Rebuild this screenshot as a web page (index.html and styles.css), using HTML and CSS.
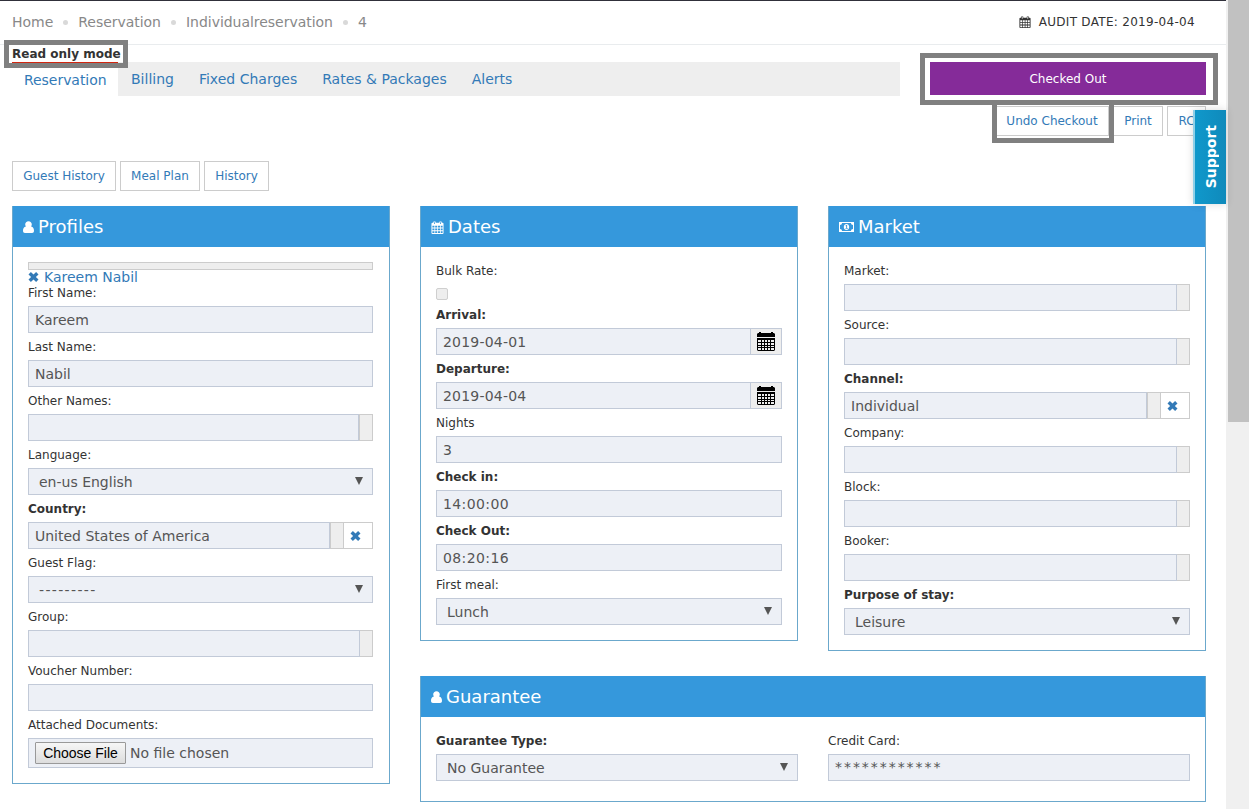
FILE: index.html
```html
<!DOCTYPE html>
<html lang="en">
<head>
    <meta charset="UTF-8">
    <meta name="viewport" content="width=device-width, initial-scale=1.0">
    <title>Reservation</title>
    <link rel="stylesheet" href="styles.css">
</head>
<body>
    <!-- Icon set -->
    <svg class="sprite" width="0" height="0">
        <symbol id="icon-user" viewBox="0 0 11 12">
            <path d="M5.5 0.2C7.4 0.2 8.8 1.6 8.8 3.3C8.8 4.3 8.5 4.9 8.1 5.4C10.2 5.7 11 7.4 11 9.8C11 11.2 10.2 12 9.1 12H1.9C0.8 12 0 11.2 0 9.8C0 7.4 0.8 5.7 2.9 5.4C2.5 4.9 2.2 4.3 2.2 3.3C2.2 1.6 3.6 0.2 5.5 0.2Z"/>
        </symbol>
        <symbol id="icon-calendar" viewBox="0 0 13 14">
            <path fill-rule="evenodd" d="M1 2H2V1C2 0.3 4.5 0.3 4.5 1V2H8.5V1C8.5 0.3 11 0.3 11 1V2H12C12.6 2 13 2.4 13 3V13C13 13.6 12.6 14 12 14H1C0.4 14 0 13.6 0 13V3C0 2.4 0.4 2 1 2ZM1 5V7H3.2V5ZM4 5V7H6.2V5ZM7 5V7H9.2V5ZM10 5V7H12V5ZM1 8V10H3.2V8ZM4 8V10H6.2V8ZM7 8V10H9.2V8ZM10 8V10H12V8ZM1 11V13H3.2V11ZM4 11V13H6.2V11ZM7 11V13H9.2V11ZM10 11V13H12V11ZM2.8 1.3V3.3H3.7V1.3ZM9.3 1.3V3.3H10.2V1.3Z"/>
        </symbol>
        <symbol id="icon-money" viewBox="0 0 15 10">
            <path fill-rule="evenodd" d="M0 0H15V10H0ZM3 1C3 2.2 2.2 3 1 3V7C2.2 7 3 7.8 3 9H12C12 7.8 12.8 7 14 7V3C12.8 3 12 2.2 12 1ZM7.5 2C9 2 10.2 3.2 10.2 5C10.2 6.8 9 8 7.5 8C6 8 4.8 6.8 4.8 5C4.8 3.2 6 2 7.5 2ZM6.4 3.7L6.8 4.2L7.2 4V6H6.5V6.7H8.8V6H8.1V3.1H7.4Z"/>
        </symbol>
        <symbol id="icon-datepicker" viewBox="0 0 18 19">
            <path fill-rule="evenodd" d="M1 1H2V0H4V1H14V0H16V1H17L18 2V5H0V2ZM0 6H18V18L17 19H1L0 18ZM1 8V10H4V8ZM5 8V10H7V8ZM8 8V10H10V8ZM11 8V10H13V8ZM14 8V10H17V8ZM1 11V13H4V11ZM5 11V13H7V11ZM8 11V13H10V11ZM11 11V13H13V11ZM14 11V13H17V11ZM1 14V15H4V14ZM5 14V15H7V14ZM8 14V15H10V14ZM11 14V15H13V14ZM14 14V15H17V14ZM1 16V18H4V16ZM5 16V18H7V16ZM8 16V18H10V16ZM11 16V18H13V16ZM14 16V18H17V16Z"/>
        </symbol>
        <symbol id="icon-times" viewBox="0 0 10 10">
            <path d="M2.4 0.1L5 2.5L7.6 0.1L10 2.4L7.4 5L10 7.6L7.6 9.9L5 7.5L2.4 9.9L0 7.6L2.6 5L0 2.4Z"/>
        </symbol>
    </svg>

    <div class="page">
        <header class="top-bar">
            <ul class="breadcrumb">
                <li>Home</li>
                <li>Reservation</li>
                <li>Individualreservation</li>
                <li>4</li>
            </ul>
            <div class="audit-date">
                <svg width="12" height="12"><use href="#icon-calendar"/></svg>
                <span>AUDIT DATE: 2019-04-04</span>
            </div>
        </header>

        <main class="content">
            <div class="read-only"><span class="read-only-text">Read only mode</span></div>

            <div class="nav-row">
                <ul class="tabs">
                    <li class="active">Reservation</li>
                    <li>Billing</li>
                    <li>Fixed Charges</li>
                    <li>Rates &amp; Packages</li>
                    <li>Alerts</li>
                </ul>
                <div class="status">Checked Out</div>
            </div>

            <div class="actions">
                <a class="btn undo">Undo Checkout</a>
                <a class="btn print">Print</a>
                <a class="btn rc">RC</a>
            </div>

            <div class="history">
                <a class="btn guest-history">Guest History</a>
                <a class="btn meal-plan">Meal Plan</a>
                <a class="btn history-link">History</a>
            </div>

            <div class="panels">
                <section class="panel profiles">
                    <h2><svg width="11" height="12"><use href="#icon-user"/></svg>Profiles</h2>
                    <div class="panel-body">
                        <div class="strip"></div>
                        <div class="guest"><svg width="11" height="10"><use href="#icon-times"/></svg>Kareem Nabil</div>
                        <label>First Name:</label>
                        <div class="field">Kareem</div>
                        <label>Last Name:</label>
                        <div class="field">Nabil</div>
                        <label>Other Names:</label>
                        <div class="group"><div class="field"></div><span class="addon double"></span></div>
                        <label>Language:</label>
                        <div class="field select">en-us English</div>
                        <label class="required">Country:</label>
                        <div class="group">
                            <div class="field">United States of America</div><span class="addon double"></span>
                            <span class="clear"><svg width="11" height="10"><use href="#icon-times"/></svg></span>
                        </div>
                        <label>Guest Flag:</label>
                        <div class="field select dashes">---------</div>
                        <label>Group:</label>
                        <div class="group"><div class="field"></div><span class="addon"></span></div>
                        <label>Voucher Number:</label>
                        <div class="field"></div>
                        <label>Attached Documents:</label>
                        <div class="field file"><span class="file-btn">Choose File</span>No file chosen</div>
                    </div>
                </section>

                <div class="right-side">
                    <section class="panel">
                        <h2><svg width="13" height="13"><use href="#icon-calendar"/></svg>Dates</h2>
                        <div class="panel-body">
                            <label>Bulk Rate:</label>
                            <div class="check-row"><span class="checkbox"></span></div>
                            <label class="required">Arrival:</label>
                            <div class="group">
                                <div class="field date">2019-04-01</div>
                                <span class="picker"><svg width="18" height="19"><use href="#icon-datepicker"/></svg></span>
                            </div>
                            <label class="required">Departure:</label>
                            <div class="group">
                                <div class="field date">2019-04-04</div>
                                <span class="picker"><svg width="18" height="19"><use href="#icon-datepicker"/></svg></span>
                            </div>
                            <label>Nights</label>
                            <div class="field">3</div>
                            <label class="required">Check in:</label>
                            <div class="field time">14:00:00</div>
                            <label class="required">Check Out:</label>
                            <div class="field time">08:20:16</div>
                            <label>First meal:</label>
                            <div class="field select">Lunch</div>
                        </div>
                    </section>

                    <section class="panel">
                        <h2><svg width="15" height="10"><use href="#icon-money"/></svg>Market</h2>
                        <div class="panel-body">
                            <label>Market:</label>
                            <div class="group"><div class="field"></div><span class="addon"></span></div>
                            <label>Source:</label>
                            <div class="group"><div class="field"></div><span class="addon"></span></div>
                            <label class="required">Channel:</label>
                            <div class="group">
                                <div class="field">Individual</div><span class="addon double"></span>
                                <span class="clear"><svg width="11" height="10"><use href="#icon-times"/></svg></span>
                            </div>
                            <label>Company:</label>
                            <div class="group"><div class="field"></div><span class="addon"></span></div>
                            <label>Block:</label>
                            <div class="group"><div class="field"></div><span class="addon"></span></div>
                            <label>Booker:</label>
                            <div class="group"><div class="field"></div><span class="addon"></span></div>
                            <label class="required">Purpose of stay:</label>
                            <div class="field select">Leisure</div>
                        </div>
                    </section>

                    <section class="panel guarantee">
                        <h2><svg width="11" height="12"><use href="#icon-user"/></svg>Guarantee</h2>
                        <div class="panel-body">
                            <div>
                                <label class="required">Guarantee Type:</label>
                                <div class="field select">No Guarantee</div>
                            </div>
                            <div>
                                <label>Credit Card:</label>
                                <div class="field card">************</div>
                            </div>
                        </div>
                    </section>
                </div>
            </div>
        </main>

        <!-- Highlight boxes -->
        <div class="mark mark-mode"></div>
        <div class="mark mark-undo"></div>
        <div class="mark mark-status"></div>

        <div class="support"><span>Support</span></div>
    </div>
    <div class="scrollbar"><div class="thumb"></div></div>
</body>
</html>
```
FILE: styles.css
```css
* {
    box-sizing: border-box;
}

body {
    display: flex;
    height: 809px;
    margin: 0;
    overflow: hidden;
    background-color: #ffffff;
    color: #333333;
    font-family: "DejaVu Sans", Verdana, sans-serif;
    font-size: 14px;
}

ul {
    display: flex;
    list-style: none;
    margin: 0;
    padding: 0;
}

svg {
    flex: none;
    fill: currentColor;
}

.sprite {
    position: absolute;
}

.page {
    position: relative;
    flex: 1;
    border-top: 1px solid #30303a;
}

/* Header */
.top-bar {
    display: flex;
    justify-content: space-between;
    height: 44px;
    padding: 0 31px 0 12px;
    border-bottom: 1px solid #e9ecee;
    line-height: 42px;
}

.breadcrumb {
    height: 42px;
    color: #888888;
    letter-spacing: -0.03px;
}

.breadcrumb li {
    display: flex;
    align-items: center;
}

.breadcrumb li + li::before {
    content: "";
    width: 5px;
    height: 5px;
    margin: 0 10px;
    border-radius: 50%;
    background-color: #d9d9d9;
}

.audit-date {
    display: flex;
    align-items: center;
    gap: 8px;
    font-size: 12px;
    letter-spacing: 0.3px;
    line-height: 40px;
    height: 41px;
}

.content {
    padding: 0 20px 0 12px;
}

.read-only {
    height: 17px;
    font-size: 12px;
    font-weight: bold;
    line-height: 19px;
}

.read-only-text {
    display: block;
    width: 106px;
    white-space: nowrap;
}

/* Tabs */
.nav-row {
    display: flex;
    gap: 30px;
    height: 34px;
}

.tabs {
    flex: 1;
    background-color: #eeeeee;
    color: #337ab7;
    line-height: 34px;
}

.tabs li {
    padding: 0 12px 0 13px;
}

.tabs .active {
    width: 106px;
    padding: 0 0 0 12px;
    border-top: 1px solid #d12610;
    background-color: #ffffff;
    letter-spacing: -0.05px;
}

.status {
    width: 276px;
    height: 33px;
    background-color: #852b99;
    color: #ffffff;
    font-size: 12px;
    line-height: 35px;
    text-align: center;
}

.actions,
.history {
    display: flex;
    gap: 4px;
}

.actions {
    justify-content: flex-end;
    margin-top: 10px;
}

.history {
    margin-top: 25px;
}

.btn {
    height: 30px;
    border: 1px solid #cccccc;
    background-color: #ffffff;
    color: #337ab7;
    font-size: 12px;
    line-height: 29px;
    text-align: center;
    white-space: nowrap;
}

.undo {
    width: 114px;
}

.print {
    width: 50px;
}

.rc {
    width: 39px;
}

.guest-history {
    width: 104px;
}

.meal-plan {
    width: 80px;
}

.history-link {
    width: 65px;
}

/* Panels */
.panels {
    display: grid;
    grid-template-columns: 378px 1fr;
    gap: 30px;
    align-items: start;
    margin-top: 15px;
}

.right-side {
    display: grid;
    grid-template-columns: 1fr 1fr;
    gap: 25px 30px;
    align-items: start;
}

.panel {
    border: 1px solid #6ba8cc;
    border-top: 0;
}

.panel h2 {
    display: flex;
    align-items: center;
    gap: 4px;
    height: 41px;
    margin: 0;
    padding: 0 10px;
    background-color: #3598dc;
    color: #ffffff;
    font-size: 18px;
    font-weight: normal;
}

.panel h2 svg {
    margin-top: 1px;
}

.panel-body {
    padding: 10px 15px 15px;
}

.profiles .panel-body {
    padding: 15px 16px 15px 15px;
}

.guarantee {
    grid-column: span 2;
}

.guarantee .panel-body {
    display: grid;
    grid-template-columns: 1fr 1fr;
    gap: 30px;
    padding-bottom: 20px;
}

.strip {
    height: 8px;
    border: 1px solid #cccccc;
    background-color: #eeeeee;
}

.guest {
    display: flex;
    align-items: center;
    gap: 5px;
    height: 14px;
    margin-bottom: -5px;
    color: #337ab7;
    line-height: 14px;
}

label {
    display: block;
    height: 27px;
    font-size: 12px;
    line-height: 29px;
}

.required {
    font-weight: bold;
}

.field {
    position: relative;
    flex: 1;
    height: 27px;
    padding: 0 6px;
    border: 1px solid #c2cad8;
    background-color: #edf0f6;
    color: #555555;
    line-height: 26px;
}

.date {
    letter-spacing: 0.2px;
}

.time {
    letter-spacing: 0.4px;
}

.card {
    line-height: 24px;
    letter-spacing: 1.95px;
}

.select {
    padding-left: 10px;
}

.dashes {
    letter-spacing: 1.35px;
}

/* Dropdown arrow */
.select::after {
    content: "";
    position: absolute;
    top: 8px;
    right: 9px;
    border: 4px solid transparent;
    border-top: 8px solid #555555;
    border-bottom: 0;
}

.group {
    display: flex;
}

.addon {
    width: 13px;
    border: 1px solid #cccccc;
    border-left: 0;
    background-color: #eeeeee;
}

.double {
    width: 14px;
    border-left: 1px solid #cccccc;
}

.clear {
    display: flex;
    align-items: center;
    width: 29px;
    padding-left: 6px;
    border: 1px solid #cccccc;
    border-left: 0;
    color: #337ab7;
}

.picker {
    display: flex;
    align-items: center;
    justify-content: center;
    width: 31px;
    border: 1px solid #c2cad8;
    border-left: 0;
    background-color: #eeeeee;
    color: #000000;
}

.check-row {
    height: 17px;
    padding-top: 4px;
}

.checkbox {
    display: block;
    width: 12px;
    height: 12px;
    border: 1px solid #cfcfcf;
    border-radius: 2px;
    background-color: #eeeeee;
}

.file {
    display: flex;
    align-items: center;
    gap: 4px;
    height: 30px;
}

.file-btn {
    width: 91px;
    height: 22px;
    border: 1px solid #999999;
    border-radius: 1px;
    background: linear-gradient(#f6f6f6, #dddddd);
    color: #000000;
    font-family: "Liberation Sans", Arial, sans-serif;
    line-height: 20px;
    text-align: center;
}

/* Highlight boxes drawn over the page */
.mark {
    position: absolute;
    border: 5px solid #808080;
}

.mark-mode {
    top: 39px;
    left: 4px;
    width: 124px;
    height: 28px;
}

.mark-status {
    top: 52px;
    left: 920px;
    width: 298px;
    height: 52px;
}

.mark-undo {
    top: 99px;
    left: 992px;
    width: 122px;
    height: 43px;
}

.support {
    position: absolute;
    top: 109px;
    right: 0;
    display: flex;
    align-items: center;
    justify-content: center;
    width: 33px;
    height: 94px;
    border-left: 2px solid #8fd0e8;
    background: linear-gradient(90deg, #1098cb, #0f8abb);
    box-shadow: 0 0 8px rgba(0, 0, 0, 0.15);
    color: #ffffff;
    font-weight: bold;
}

.support span {
    writing-mode: vertical-rl;
    transform: rotate(180deg);
}

.scrollbar {
    width: 23px;
    padding-left: 2px;
    background-color: #f0f0f0;
}

.thumb {
    height: 422px;
    background-color: #c1c1c1;
}
```
